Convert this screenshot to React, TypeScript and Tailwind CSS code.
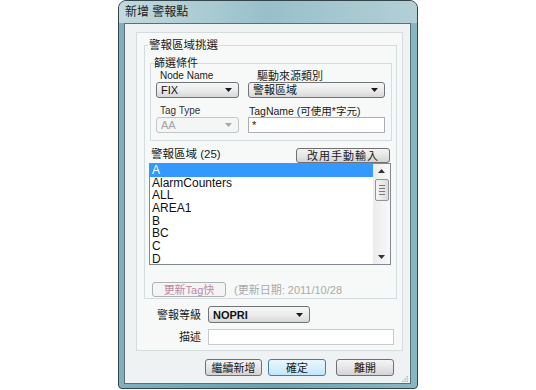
import React from 'react';

const items = ['A', 'AlarmCounters', 'ALL', 'AREA1', 'B', 'BC', 'C', 'D'];

function Arrow({ disabled }: { disabled?: boolean }) {
    return (
        <svg width="7" height="4" viewBox="0 0 7 4" className="shrink-0">
            <path d="M0 0h7L3.5 4z" fill={disabled ? '#a8a8a8' : '#1a1a1a'} />
        </svg>
    );
}

function Combo({ text, className, disabled }: { text: string; className: string; disabled?: boolean }) {
    return (
        <div
            className={
                'flex items-center justify-between rounded-[3px] border pl-[4px] pr-[6px] ' +
                (disabled
                    ? 'border-[#c2c6c9] bg-[#f4f5f5] text-[#a3a3a3] '
                    : 'border-[#6f7478] bg-gradient-to-b from-[#f6f6f6] via-[#ececec] to-[#d8d8d8] text-[#111] ') +
                className
            }
        >
            <span className="truncate">{text}</span>
            <Arrow disabled={disabled} />
        </div>
    );
}

function Btn({
    children,
    className,
    primary,
    disabled,
}: {
    children: React.ReactNode;
    className: string;
    primary?: boolean;
    disabled?: boolean;
}) {
    let tone = 'border-[#707070] bg-gradient-to-b from-[#f4f4f4] via-[#e6e6e6] to-[#d3d3d3] text-[#1a1a1a]';
    if (primary) tone = 'border-[#3c7fb1] bg-gradient-to-b from-[#eaf6fd] via-[#d9f0fc] to-[#bee6fd] text-[#1a1a1a]';
    if (disabled) tone = 'border-[#adb2b5] bg-[#f4f4f4] text-[#bd8aa3]';
    return (
        <div className={'flex shrink-0 items-center justify-center rounded-[3px] border ' + tone + ' ' + className}>
            {children}
        </div>
    );
}

function Scrollbar() {
    return (
        <div className="flex w-[17px] flex-col items-center bg-gradient-to-r from-[#ececec] to-[#f8f8f8]">
            <div className="flex h-[14px] items-center justify-center">
                <svg width="7" height="4" viewBox="0 0 7 4">
                    <path d="M3.5 0L7 4H0z" fill="#333" />
                </svg>
            </div>
            <div className="mt-[1px] flex h-[22px] w-[14px] flex-col items-center justify-center gap-[2px] rounded-[2px] border border-[#949494] bg-gradient-to-r from-[#f5f5f5] to-[#dcdcdc]">
                <div className="h-px w-[6px] bg-[#7a7a7a]" />
                <div className="h-px w-[6px] bg-[#7a7a7a]" />
                <div className="h-px w-[6px] bg-[#7a7a7a]" />
                <div className="h-px w-[6px] bg-[#7a7a7a]" />
            </div>
            <div className="flex-1" />
            <div className="flex h-[14px] items-center justify-center">
                <svg width="7" height="4" viewBox="0 0 7 4">
                    <path d="M0 0h7L3.5 4z" fill="#333" />
                </svg>
            </div>
        </div>
    );
}

export default function App() {
    return (
        <div className="flex h-[390px] w-full justify-center bg-white font-['Liberation_Sans','Noto_Sans_CJK_TC',sans-serif] text-[11px] leading-[12px] text-[#1a1a1a]">
            <div className="flex h-[389px] w-[300px] flex-col rounded-t-[8px] rounded-b-[4px] border border-[#34444b] bg-gradient-to-r from-[#7fb0be] via-[#6aa1b1] to-[#88b7c3] pr-[6px] pb-[4px] pl-[5px]">
                <div className="-mr-[6px] -ml-[5px] flex h-[22px] shrink-0 items-center rounded-t-[7px] bg-gradient-to-r from-[#c2dade] via-[#98c0ca] to-[#b2cfd6] pl-[6px] text-[12px] text-[#1c1c1c]">
                    新增 警報點
                </div>
                <div className="flex min-h-0 flex-1 flex-col border border-[#5b6f76] bg-[#eef2f2]">
                    <div className="mt-[8px] ml-[11px] flex h-[319px] w-[267px] shrink-0 flex-col border border-[#d4dcde] bg-[#f7f9f9]">
                        <fieldset className="mt-[5px] ml-[7px] w-[253px] border border-[#d3dde0] pb-[1px]">
                            <legend className="ml-[3px] px-[1px] text-[11.5px] leading-[14px]">警報區域挑選</legend>
                            <fieldset className="mt-[4px] ml-[5px] w-[242px] border border-[#d3dde0] px-[5px] pb-[7px]">
                                <legend className="-ml-[2px] px-0 leading-[14px]">篩選條件</legend>
                                <div className="grid grid-cols-[83px_137px] gap-x-[9px]">
                                    <div className="h-[12px] pl-[4px] text-[10px]">Node Name</div>
                                    <div className="h-[12px] pl-[9px]">驅動來源類別</div>
                                    <Combo text="FIX" className="h-[16px]" />
                                    <Combo text="警報區域" className="h-[16px]" />
                                    <div className="mt-[7px] h-[12px] pl-[4px] text-[10px] text-[#333]">Tag Type</div>
                                    <div className="mt-[7px] h-[12px] pl-[1px] text-[10.5px]">TagName (可使用*字元)</div>
                                    <Combo text="AA" className="h-[16px]" disabled />
                                    <div className="flex h-[16px] items-center border border-[#abadb3] bg-white pl-[3px]">*</div>
                                </div>
                            </fieldset>
                            <div className="mt-[7px] mr-[6px] ml-[6px] flex h-[15px] items-start justify-between">
                                <span className="text-[11.5px]">警報區域 (25)</span>
                                <Btn className="h-[15px] w-[94px] tracking-[1px]">改用手動輸入</Btn>
                            </div>
                            <div className="ml-[4px] flex h-[102px] w-[242px] border border-[#828790] bg-white">
                                <div className="flex flex-1 flex-col text-[12px]">
                                    {items.map((it, i) => (
                                        <div
                                            key={it}
                                            className={
                                                'flex h-[12.7px] items-center pl-[2px] leading-[12.7px] ' +
                                                (i === 0 ? 'bg-[#3399ff] text-white' : 'text-[#111]')
                                            }
                                        >
                                            {it}
                                        </div>
                                    ))}
                                </div>
                                <Scrollbar />
                            </div>
                            <div className="mt-[17px] ml-[7px] flex items-center gap-[8px]">
                                <Btn className="h-[15px] w-[74px]" disabled>
                                    更新Tag快
                                </Btn>
                                <span className="text-[#a9a9a9]">(更新日期: 2011/10/28</span>
                            </div>
                        </fieldset>
                        <div className="mt-[7px] flex items-center gap-[7px]">
                            <div className="w-[64px] text-right">警報等級</div>
                            <Combo text="NOPRI" className="h-[17px] w-[102px] font-bold" />
                        </div>
                        <div className="mt-[6px] flex items-center gap-[7px]">
                            <div className="w-[64px] text-right">描述</div>
                            <div className="h-[16px] w-[186px] border border-[#c5cacd] bg-white" />
                        </div>
                    </div>
                    <div className="mt-[8px] mr-[16px] flex shrink-0 justify-end gap-[6px]">
                        <Btn className="h-[17px] w-[57px]">繼續新增</Btn>
                        <Btn className="mr-[4px] h-[17px] w-[58px]" primary>
                            確定
                        </Btn>
                        <Btn className="h-[17px] w-[58px]">離開</Btn>
                    </div>
                    <div className="flex min-h-0 flex-1 items-end justify-end pr-[2px] pb-[1px]">
                        <svg width="6" height="6" viewBox="0 0 6 6">
                            <rect x="4.5" y="0" width="1.5" height="1.5" fill="#b8c0c2" />
                            <rect x="2.25" y="2.25" width="1.5" height="1.5" fill="#b8c0c2" />
                            <rect x="4.5" y="2.25" width="1.5" height="1.5" fill="#b8c0c2" />
                            <rect x="0" y="4.5" width="1.5" height="1.5" fill="#b8c0c2" />
                            <rect x="2.25" y="4.5" width="1.5" height="1.5" fill="#b8c0c2" />
                            <rect x="4.5" y="4.5" width="1.5" height="1.5" fill="#b8c0c2" />
                        </svg>
                    </div>
                </div>
            </div>
        </div>
    );
}
